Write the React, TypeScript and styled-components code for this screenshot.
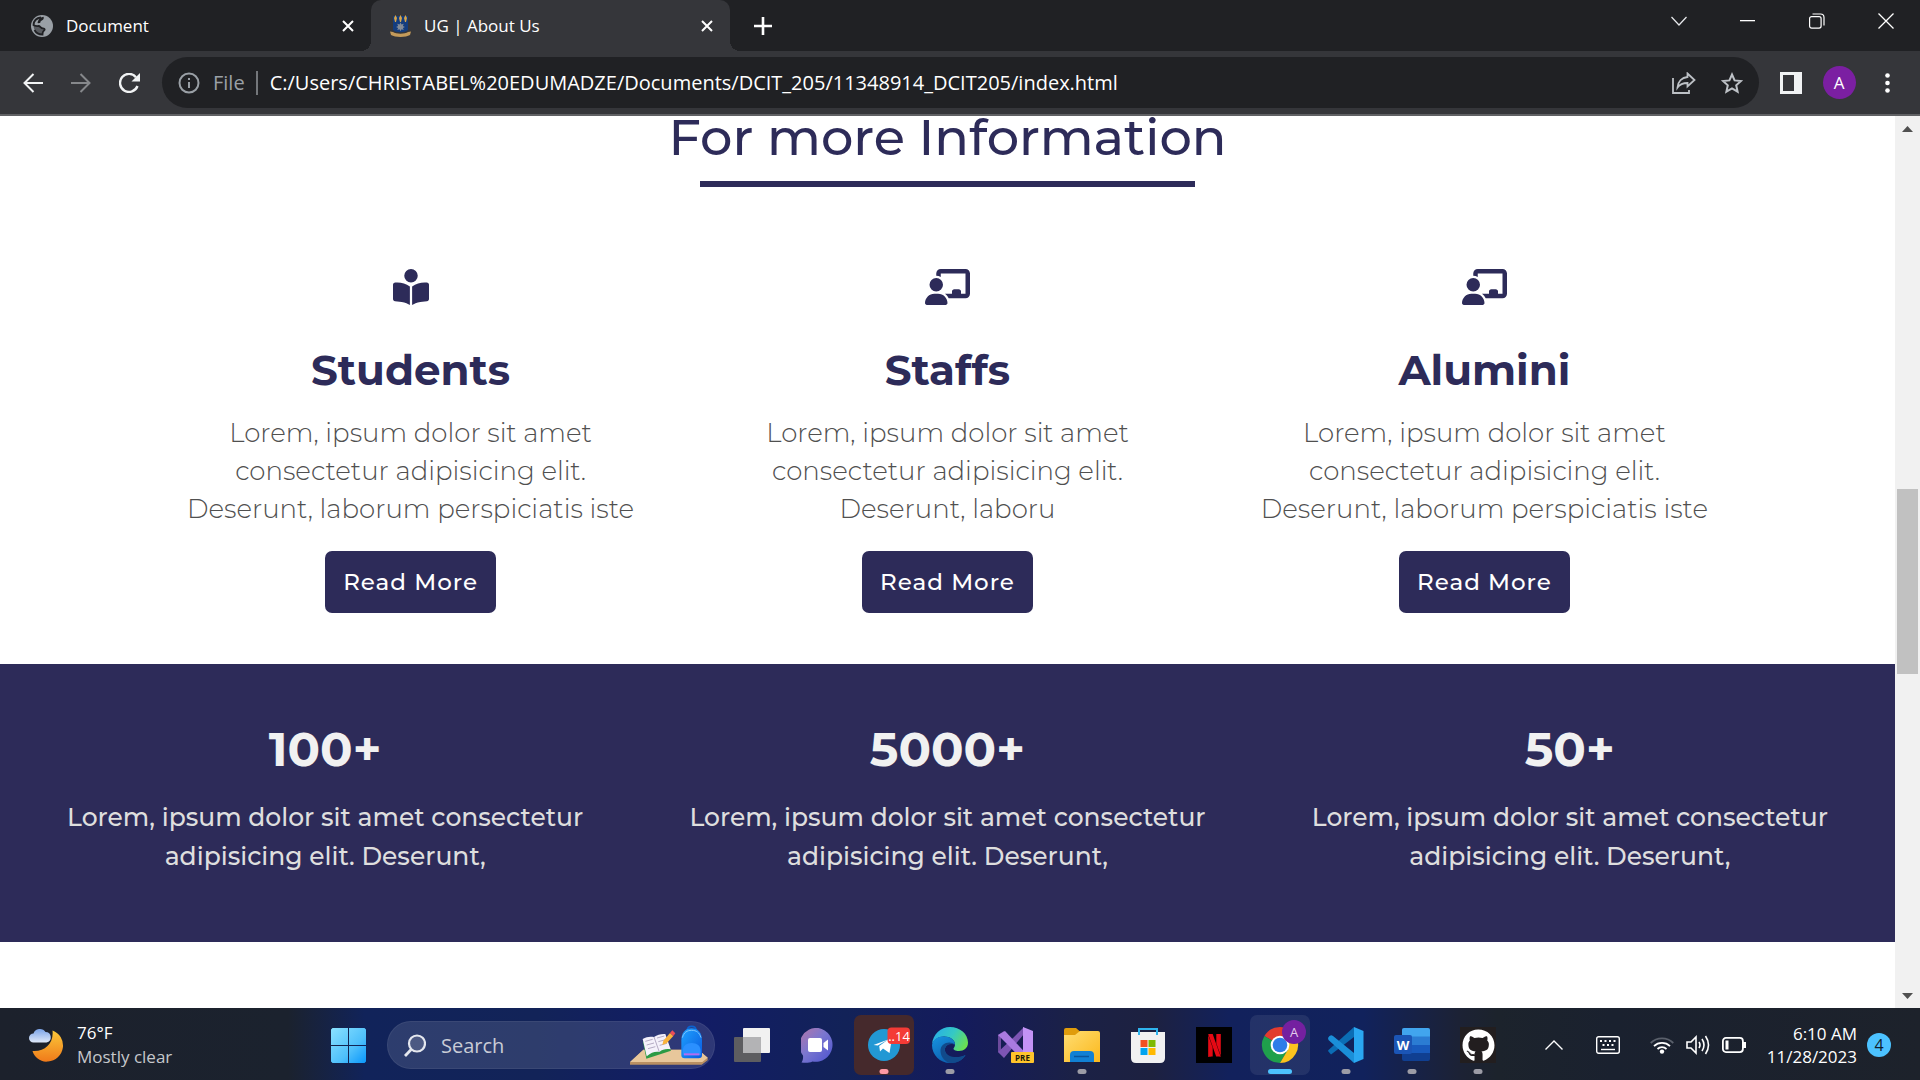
import React from "react";
import styled, { createGlobalStyle, css } from "styled-components";
import { FaBookOpenReader, FaChalkboardUser, FaGithub } from "react-icons/fa6";
import { SiNetflix } from "react-icons/si";

const brand = "#2d2b59";
const uiFont = `"Segoe UI", "Open Sans", "Noto Sans", sans-serif`;
const pageFont = `Montserrat, Inter, sans-serif`;

const GlobalStyle = createGlobalStyle`
  *, *::before, *::after { box-sizing: border-box; }
  html, body { margin: 0; background: #fff; }
  button, input { font: inherit; color: inherit; border: 0; padding: 0; background: none; outline: none; }
  button { cursor: pointer; }
  svg { display: block; flex: none; }
`;

const Screen = styled.div`
  display: flex;
  flex-direction: column;
  height: 100vh;
  overflow: hidden;
  font-family: ${uiFont};
`;

/* ---------- Browser frame ---------- */

const TabStrip = styled.header`
  display: flex;
  height: 51px;
  background: #202124;
  color: #fff;
`;

const Tab = styled.div<{ $active?: boolean }>`
  display: flex;
  align-items: center;
  width: ${(p) => (p.$active ? 359 : 371)}px;
  padding: 0 16px 0 ${(p) => (p.$active ? 19 : 31)}px;
  gap: 13px;
  font-size: 17px;
  position: relative;
  ${(p) =>
    p.$active &&
    css`
      background: #35363a;
      border-radius: 10px 10px 0 0;
      &::before,
      &::after {
        content: "";
        position: absolute;
        bottom: 0;
        width: 10px;
        height: 10px;
      }
      &::before {
        left: -10px;
        background: radial-gradient(circle at 0 0, transparent 10px, #35363a 10px);
      }
      &::after {
        right: -10px;
        background: radial-gradient(circle at 100% 0, transparent 10px, #35363a 10px);
      }
    `}
`;

const TabTitle = styled.span`
  flex: 1;
  white-space: nowrap;
`;

const IconButton = styled.button<{ $w?: number; $h?: number }>`
  display: flex;
  flex: none;
  align-items: center;
  justify-content: center;
  width: ${(p) => p.$w ?? 48}px;
  height: ${(p) => p.$h ?? 51}px;
`;

const WindowControls = styled.div`
  display: flex;
  margin-left: auto;
`;

const Toolbar = styled.nav`
  display: flex;
  align-items: center;
  padding: 6px 9px;
  background: #35363a;
  border-bottom: 2px solid #606164;
  color: #f1f3f4;
`;

const Omnibox = styled.div`
  display: flex;
  flex: 1;
  align-items: center;
  height: 51px;
  margin: 0 8px 0 9px;
  padding: 0 3px 0 16px;
  border-radius: 26px;
  background: #202124;
  font-size: 20px;
`;

const Scheme = styled.span`
  margin-left: 13px;
  padding-right: 11px;
  border-right: 2px solid #74777b;
  color: #9aa0a6;
  line-height: 24px;
`;

const Address = styled.input`
  flex: 1;
  min-width: 0;
  margin-left: 12px;
  color: #fff;
`;

const Avatar = styled.span`
  width: 33px;
  height: 33px;
  border-radius: 50%;
  background: #7b1fa2;
  color: #fff;
  font-size: 17px;
  line-height: 33px;
`;

/* ---------- Page ---------- */

const Viewport = styled.div`
  display: flex;
  flex: 1;
  min-height: 0;
`;

const Page = styled.main`
  flex: 1;
  overflow: clip;
  overflow-clip-margin: 12px;
  background: #fff;
  color: ${brand};
  font-family: ${pageFont};
  text-align: center;
`;

const Heading = styled.h1`
  width: max-content;
  margin: 0 auto;
  font-size: 51px;
  font-weight: 500;
  line-height: 42px;
`;

const Rule = styled.hr`
  width: 495px;
  height: 6px;
  margin: 23px auto 82px;
  border: 0;
  background: ${brand};
`;

const Cards = styled.section`
  display: grid;
  grid-template-columns: repeat(3, 1fr);
  width: 85%;
  margin: 0 auto;
`;

const Card = styled.article`
  display: flex;
  flex-direction: column;
  align-items: center;
  padding: 0 36px 51px;
`;

const CardIcon = styled.span<{ $wide?: boolean }>`
  svg {
    width: ${(p) => (p.$wide ? 45 : 36)}px;
    height: 36px;
  }
`;

const CardTitle = styled.h2`
  margin: 40px 0 19px;
  font-size: 42px;
  font-weight: 700;
  line-height: 50px;
`;

const CardText = styled.p`
  margin: 0 0 23px;
  color: #505050;
  font-size: 26px;
  font-weight: 300;
  line-height: 38px;
`;

const ReadMore = styled.a`
  padding: 0 18px;
  border-radius: 7px;
  background: ${brand};
  color: #fff;
  font-size: 23px;
  font-weight: 500;
  letter-spacing: 1px;
  line-height: 62px;
  text-decoration: none;
`;

const Stats = styled.section`
  display: grid;
  grid-template-columns: repeat(3, 1fr);
  padding: 56px 14px 66px;
  background: ${brand};
`;

const Stat = styled.div`
  padding: 0 45px;
`;

const StatNumber = styled.h2`
  margin: 0 0 20px;
  color: #f1f1f1;
  font-size: 48px;
  font-weight: 700;
  line-height: 58px;
`;

const StatText = styled.p`
  margin: 0;
  color: #dedede;
  font-size: 25px;
  font-weight: 500;
  line-height: 39px;
`;

const ScrollBar = styled.aside`
  display: flex;
  flex-direction: column;
  align-items: center;
  width: 25px;
  background: #f1f1f1;
`;

const ScrollSpace = styled.div<{ $grow: number }>`
  flex: ${(p) => p.$grow} 0 0;
`;

const ScrollThumb = styled.div`
  flex: 185 0 0;
  width: 21px;
  background: #c1c1c1;
`;

/* ---------- Taskbar ---------- */

const Taskbar = styled.footer`
  display: flex;
  align-items: center;
  height: 72px;
  padding-top: 2px;
  background: linear-gradient(90deg, #1c212c 0%, #1b222e 15%, #11235a 19%, #122358 28%, #121c66 36%, #122258 44%, #141b5c 50%, #1b2146 56%, #1d2140 60%, #12215c 64%, #11225c 71%, #1c2235 76%, #1c232c 78%, #1a212f 84%, #1d222b 100%);
  color: #fff;
  font-size: 17px;
`;

const Weather = styled.div`
  display: flex;
  align-items: center;
  width: 315px;
  padding-left: 29px;
  gap: 12px;
  line-height: 24px;
`;

const Muted = styled.div`
  color: #c6c8cb;
`;

const TaskButton = styled.button<{ $tile?: string; $mark?: string; $markWidth?: number }>`
  display: flex;
  flex: none;
  align-items: center;
  justify-content: center;
  position: relative;
  width: 60px;
  height: 60px;
  margin: 0 3px;
  border-radius: 7px;
  background: ${(p) => p.$tile ?? "transparent"};
  ${(p) =>
    p.$mark &&
    css`
      &::after {
        content: "";
        position: absolute;
        bottom: 1px;
        left: 50%;
        width: ${p.$markWidth ?? 9}px;
        height: 5px;
        border-radius: 3px;
        background: ${p.$mark};
        transform: translateX(-50%);
      }
    `}
`;

const SearchBox = styled.label`
  display: flex;
  align-items: center;
  width: 328px;
  height: 48px;
  margin: 0 4px 0 6px;
  padding: 0 6px 0 16px;
  gap: 15px;
  border: 1px solid rgba(255, 255, 255, 0.06);
  border-radius: 24px;
  background: rgba(255, 255, 255, 0.12);
  font-size: 20px;
  input {
    flex: 1;
    min-width: 0;
  }
  input::placeholder {
    color: #c9ccd6;
    opacity: 1;
  }
`;

const Tray = styled.div`
  display: flex;
  align-items: center;
  margin-left: auto;
  padding-right: 29px;
`;

const TrayButton = styled.button<{ $gap: number }>`
  margin-right: ${(p) => p.$gap}px;
`;

const Clock = styled.time`
  margin-right: 10px;
  line-height: 23px;
  text-align: right;
`;

const Notice = styled.span`
  width: 24px;
  height: 24px;
  border-radius: 50%;
  background: #4cc2ff;
  color: #10202c;
  font-size: 16px;
  line-height: 24px;
  text-align: center;
`;

/* ---------- Drawings ---------- */

const Close = () => (
  <svg width="12" height="12" viewBox="0 0 12 12" stroke="#fff" strokeWidth="2">
    <path d="M1 1l10 10M11 1L1 11" />
  </svg>
);

const Globe = () => (
  <svg width="22" height="22" viewBox="0 0 22 22">
    <circle cx="11" cy="11" r="11" fill="#9aa0a6" />
    <path d="M10 2.500C5.500 3 2.800 6 2.500 10c1.500 1 3 1.200 5 1 2 0 2 2.300 4.500 2.300 2 0 2.200 1.500.8 2.500-1.200.9-1.300 2-1.300 3.700-3.500 0-6.500-1.500-8-4.500" fill="none" stroke="#202124" strokeWidth="1.800" />
    <path d="M12.500 1.800c1 2.500-1 3.400-2.500 4.200-.8.500-.2 1.800-1.200 2-1 .2-1.600.2-2.300 0 .5-2.500 1.500-4.200 3.500-5.500z" fill="#202124" />
    <path d="M2.500 10.500c2 1.500 4 .8 6 1 1.800.3 2 2 3.800 2.200 1.700.2 1.400 1.800.2 2.600-1.100.8-1 1.700-1 3.200-5 0-8.700-3.500-9-9z" fill="#202124" opacity="0.55" />
  </svg>
);

const Crest = () => (
  <svg width="21" height="22" viewBox="0 0 21 22">
    <path d="M3 1h15v14c-3 3-12 3-15 0z" fill="#143d7e" />
    <path d="M5.500 0L7 3 6 7H5L4 3zM10.500 0L12 3l-1 4h-1L9 3zM15.500 0L17 3l-1 4h-1l-1-4z" fill="#d8a64a" />
    <path d="M10.500 7.500l1 2 2.200-.8-.8 2.200 2 1-2 1 .8 2.100-2.200-.7-1 1.900-1-1.900-2.200.7.8-2.100-2-1 2-1-.8-2.200 2.200.8z" fill="#848c96" />
    <path d="M0 16.500l3 .5c3 2.300 12 2.300 15 0l3-.5-1 3.500c-4 2.500-15 2.500-19 0z" fill="#c49b5a" />
  </svg>
);

const WeatherIcon = () => (
  <svg width="36" height="34" viewBox="0 0 36 34">
    <defs>
      <linearGradient id="moon" x1="0" y1="0" x2="0" y2="1">
        <stop stopColor="#fbc93a" />
        <stop offset="1" stopColor="#f07a1a" />
      </linearGradient>
      <linearGradient id="cloud" x1="0" y1="0" x2="0" y2="1">
        <stop stopColor="#7aa3e8" />
        <stop offset="1" stopColor="#dfe9fa" />
      </linearGradient>
    </defs>
    <path d="M23.500 2.500a16 16 0 0 1-4.500 31C12 34.500 5.500 29.500 3.500 23 16 24 25 15 23.500 2.500z" fill="url(#moon)" />
    <path d="M4.500 14.500a4.500 4.500 0 0 1 0-9A6.500 6 0 0 1 16.500 4a5.300 5.300 0 0 1 1 10.500z" fill="url(#cloud)" />
  </svg>
);

const WindowsLogo = () => (
  <svg width="35" height="35" viewBox="0 0 35 35">
    <defs>
      <linearGradient id="win" x1="0" y1="0" x2="1" y2="1">
        <stop stopColor="#8be2ff" />
        <stop offset="0.6" stopColor="#4fc0fb" />
        <stop offset="1" stopColor="#0a97fb" />
      </linearGradient>
    </defs>
    <path d="M1.500 0H17v17H0V1.500zM18 0h15.500L35 1.500V17H18zM0 18h17v17H1.500L0 33.500zM18 18h17v15.500L33.500 35H18z" fill="url(#win)" />
  </svg>
);

const SearchArt = () => (
  <svg width="78" height="40" viewBox="450 78 234 120">
    <defs>
      <linearGradient id="bag" x1="0" y1="0" x2="1" y2="1">
        <stop stopColor="#1fa2ff" />
        <stop offset="1" stopColor="#0a5be0" />
      </linearGradient>
    </defs>
    <path d="M450 190l40-38h165l28 24v8l-18 13H450z" fill="#b98f62" />
    <path d="M450 189l40-37h165l28 24-16 13z" fill="#e8c79b" />
    <path d="M489 128l66-18 18 45-74 24z" fill="#2c9a45" />
    <path d="M488 120c12-7 22-8 34-6 10-7 22-10 34-9l16 46c-14-2-24 0-34 8-14-2-24 2-38 13z" fill="#f4f1fb" />
    <path d="M522 114l16 45M496 127l22-6M500 138l22-6M504 149l22-6M531 117l22-6M535 128l22-6M539 139l22-6" stroke="#b4abc4" strokeWidth="3" />
    <path d="M550 125l20-23 10 9-20 22-13 5z" fill="#f9b23c" />
    <path d="M570 102l7-8 9 9-6 8z" fill="#ec4d59" />
    <path d="M622 94q0-12 13-12t13 12" fill="none" stroke="#0b62d0" strokeWidth="5" />
    <path d="M604 124c0-22 12-36 31-36s31 14 31 36v44q0 10-10 10h-42q-10 0-10-10z" fill="url(#bag)" />
    <path d="M607 116c5-16 14-22 28-22s23 6 28 22" fill="none" stroke="#7cc6ff" strokeWidth="3" />
    <path d="M608 158c0-18 11-26 27-26s27 8 27 26v11h-54z" fill="#2b90ff" />
    <path d="M612 166h46" stroke="#b46cf0" strokeWidth="6" />
  </svg>
);

const TaskView = () => (
  <svg width="36" height="34" viewBox="0 0 36 34">
    <rect y="9" width="27" height="25" rx="1" fill="#5d5d60" />
    <rect x="9" width="27" height="25" rx="1" fill="#f1f1f1" />
    <path d="M9 9h18v16H9z" fill="#b3b3b5" />
  </svg>
);

const Chat = () => (
  <svg width="35" height="35" viewBox="0 0 35 35">
    <defs>
      <linearGradient id="chat" x1="0" y1="0" x2="1" y2="1">
        <stop stopColor="#b475a8" />
        <stop offset="0.45" stopColor="#7b77cf" />
        <stop offset="1" stopColor="#4b52cf" />
      </linearGradient>
    </defs>
    <path d="M17.500 0a17 17 0 1 1-6 33.500C8 35.200 4 35 .5 34.500c1.300-2 1.800-4.500 1.500-7A17.200 17.200 0 0 1 17.500 0z" fill="url(#chat)" />
    <rect x="7" y="10" width="14" height="14" rx="2" fill="#fff" />
    <path d="M22.500 15l4.500-3.500v11L22.500 19z" fill="#fff" />
  </svg>
);

const Telegram = () => (
  <svg width="52" height="36" viewBox="0 0 52 36">
    <circle cx="26" cy="18" r="16" fill="#2298d4" />
    <path d="M15.500 18L34 11l-2.500 15-6.500-4.500-3 3-.8-5.500 9-6.500-10.500 6z" fill="#fff" />
    <rect x="29.500" y="0.500" width="22.500" height="16.500" rx="4" fill="#f43b36" />
    <text x="41" y="13.500" fill="#fff" fontSize="13" textAnchor="middle">..14</text>
  </svg>
);

const Edge = () => (
  <svg width="36" height="36" viewBox="0 0 36 36">
    <defs>
      <linearGradient id="edgeTop" x1="0" y1="0.3" x2="1" y2="0.7">
        <stop stopColor="#28aee6" />
        <stop offset="0.5" stopColor="#35c9c4" />
        <stop offset="1" stopColor="#6de04b" />
      </linearGradient>
      <linearGradient id="edgeBody" x1="0" y1="0" x2="0.7" y2="1">
        <stop stopColor="#1693e0" />
        <stop offset="1" stopColor="#0c58a8" />
      </linearGradient>
    </defs>
    <path d="M0 17C1 7 9 0 18 0c10 0 18 7 18 15.500C36 21 32 24 27 24c-4 0-5.500-1.200-5.500-2.500.5-1 1.500-2 1.500-4C23 13 18 9.500 12 9.500S2 13 0 17z" fill="url(#edgeTop)" />
    <path d="M0 18c1-6 6-8.500 12-8.500S23 13 23 17.500C17 15 12 19 13 24c1 6 10 10 20.500 4C31 33 25 36 18 36 8 36 0 28 0 18z" fill="url(#edgeBody)" />
    <path d="M23 17.500C19 13.500 8 15 8.500 24.500 9 31 14 35.500 19 36c7 0 12-3.500 14.500-8C25 32 14.500 30 13 24c-.8-5 4-8.500 10-6.500z" fill="#114a8b" />
  </svg>
);

const VisualStudio = () => (
  <svg width="36" height="36" viewBox="0 0 36 36">
    <path d="M0 8l6-4 20 25v7L3 9v18l-3-2z" fill="#6c4a9c" />
    <path d="M0 25l6 6L26 7V0L15 11z" fill="#7d55b4" />
    <path d="M0 8l7-4 28 30h-9z" fill="#a97ae0" />
    <path d="M25 0l10 4v28l-10 4z" fill="#c493f6" />
    <rect x="13" y="25" width="23" height="11" rx="1" fill="#ffc42b" />
    <text x="24.500" y="33.500" fontSize="8" fontWeight="700" fill="#201a08" textAnchor="middle">PRE</text>
  </svg>
);

const Folder = () => (
  <svg width="36" height="34" viewBox="0 0 36 34">
    <defs>
      <linearGradient id="folder" x1="0" y1="0" x2="1" y2="1">
        <stop stopColor="#ffdd72" />
        <stop offset="1" stopColor="#fbb81c" />
      </linearGradient>
    </defs>
    <path d="M0 2q0-2 2-2h10l4 3.500h18v8H0z" fill="#e09c0b" />
    <path d="M0 7h11l5-4h18q2 0 2 2v29H0z" fill="url(#folder)" />
    <path d="M6 34v-7q0-4 4-4h16q4 0 4 4v7z" fill="#1180d4" />
    <path d="M10 28.500h15" stroke="#0a559c" strokeWidth="1.500" />
  </svg>
);

const Store = () => (
  <svg width="36" height="36" viewBox="0 0 36 36">
    <path d="M1 5h34v26q0 5-5 5H6q-5 0-5-5z" fill="#f1f1f1" />
    <path d="M9 8V2h18v6" fill="none" stroke="#2fb4ee" strokeWidth="2" />
    <path d="M10.500 13h7v7h-7z" fill="#f25022" />
    <path d="M18.500 13h7v7h-7z" fill="#7fba00" />
    <path d="M10.500 21h7v7h-7z" fill="#00a4ef" />
    <path d="M18.500 21h7v7h-7z" fill="#ffb900" />
  </svg>
);

const NetflixTile = styled.span`
  display: grid;
  place-items: center;
  width: 36px;
  height: 36px;
  background: #000;
  color: #e50914;
`;

const GithubTile = styled(NetflixTile)`
  background: #221e1f;
  color: #fff;
`;

const Chrome = () => (
  <svg width="52" height="52" viewBox="0 0 52 52">
    <path d="M26 26L10.400 17A18 18 0 0 1 41.600 17H26z" fill="#e33b2e" />
    <path d="M10.400 17A18 18 0 0 0 26 44l8-13.500-8-4.500z" fill="#1fa04c" />
    <path d="M41.600 17A18 18 0 0 1 26 44l8-13.500V17z" fill="#fcc31e" />
    <circle cx="26" cy="26" r="9.300" fill="#fff" />
    <circle cx="26" cy="26" r="7.300" fill="#2f7de9" />
    <circle cx="40" cy="13" r="12" fill="#7420a0" />
    <text x="40" y="18" fontSize="13" fill="#e3cdec" textAnchor="middle">A</text>
  </svg>
);

const VsCode = () => (
  <svg width="36" height="36" viewBox="0 0 36 36">
    <path d="M0 24l3 3.500L26 10V0L.5 23z" fill="#0b6db5" />
    <path d="M0 11q2-4 5-2l21 17v10L.5 13z" fill="#1a8fd9" />
    <path d="M26 0l9.500 4v28L26 36z" fill="#2aa7f2" />
  </svg>
);

const Word = () => (
  <svg width="36" height="34" viewBox="0 0 36 34">
    <rect x="8" width="28" height="33" rx="2" fill="#103f91" />
    <path d="M8 2q0-2 2-2h24q2 0 2 2v7H8z" fill="#41a5ee" />
    <path d="M8 8.500h28V17H8z" fill="#2b7cd3" />
    <path d="M8 17h28v8H8z" fill="#185abd" />
    <rect y="7" width="18" height="19" rx="2" fill="#1b55b5" />
    <text x="9" y="21.500" fontSize="13" fontWeight="700" fill="#fff" textAnchor="middle">W</text>
  </svg>
);

const StrokeIcon = styled.svg<{ $weight?: number }>`
  fill: none;
  stroke: currentColor;
  stroke-width: ${(p) => p.$weight ?? 2};
`;

/* ---------- Data ---------- */

const cards = [
  { title: "Students", wide: false, Icon: FaBookOpenReader, text: "Lorem, ipsum dolor sit amet consectetur adipisicing elit. Deserunt, laborum perspiciatis iste" },
  { title: "Staffs", wide: true, Icon: FaChalkboardUser, text: "Lorem, ipsum dolor sit amet consectetur adipisicing elit. Deserunt, laboru" },
  { title: "Alumini", wide: true, Icon: FaChalkboardUser, text: "Lorem, ipsum dolor sit amet consectetur adipisicing elit. Deserunt, laborum perspiciatis iste" },
];

const stats = ["100+", "5000+", "50+"];

const gray = "#9c9ca6";
const apps: { name: string; icon: React.ReactNode; tile?: string; mark?: string; markWidth?: number }[] = [
  { name: "Task view", icon: <TaskView /> },
  { name: "Chat", icon: <Chat /> },
  { name: "Telegram", icon: <Telegram />, tile: "#45292c", mark: "#ff99a4" },
  { name: "Edge", icon: <Edge />, mark: gray },
  { name: "Visual Studio", icon: <VisualStudio /> },
  { name: "File Explorer", icon: <Folder />, mark: gray },
  { name: "Store", icon: <Store /> },
  { name: "Netflix", icon: <NetflixTile><SiNetflix size={23} /></NetflixTile> },
  { name: "Chrome", icon: <Chrome />, tile: "rgba(255,255,255,0.08)", mark: "#4cc2ff", markWidth: 24 },
  { name: "Visual Studio Code", icon: <VsCode />, mark: gray },
  { name: "Word", icon: <Word />, mark: gray },
  { name: "GitHub", icon: <GithubTile><FaGithub size={33} /></GithubTile>, mark: gray },
];

export default function App() {
  return (
    <Screen>
      <GlobalStyle />
      <TabStrip>
        <Tab>
          <Globe />
          <TabTitle>Document</TabTitle>
          <IconButton $w={14} aria-label="Close tab"><Close /></IconButton>
        </Tab>
        <Tab $active>
          <Crest />
          <TabTitle>UG | About Us</TabTitle>
          <IconButton $w={14} aria-label="Close tab"><Close /></IconButton>
        </Tab>
        <IconButton $w={66} aria-label="New tab">
          <StrokeIcon $weight={2.6} width="18" height="18" viewBox="0 0 18 18">
            <path d="M9 0v18M0 9h18" />
          </StrokeIcon>
        </IconButton>
        <WindowControls>
          <IconButton $w={69} $h={42} aria-label="Search tabs">
            <svg width="16" height="10" viewBox="0 0 16 10" fill="none" stroke="#e8eaed" strokeWidth="1.200"><path d="M.5 1L8 9l7.500-8" /></svg>
          </IconButton>
          <IconButton $w={69} $h={42} aria-label="Minimize">
            <svg width="15" height="2" viewBox="0 0 15 2"><path d="M0 0h15v1.300H0z" fill="#fff" /></svg>
          </IconButton>
          <IconButton $w={69} $h={42} aria-label="Restore">
            <svg width="16" height="16" viewBox="0 0 16 16" fill="none" stroke="#fff" strokeWidth="1.200"><rect x=".6" y="3.600" width="11.500" height="11.500" rx="2" /><path d="M3.500 1h8q3.500 0 3.500 3.500v8" /></svg>
          </IconButton>
          <IconButton $w={69} $h={42} aria-label="Close window">
            <svg width="16" height="16" viewBox="0 0 16 16" stroke="#fff" strokeWidth="1.300"><path d="M.5.5l15 15M15.500.5l-15 15" /></svg>
          </IconButton>
        </WindowControls>
      </TabStrip>

      <Toolbar>
        <IconButton aria-label="Back">
          <StrokeIcon width="20" height="20" viewBox="0 0 20 20"><path d="M20 10H2M10.500 1L1.500 10l9 9" /></StrokeIcon>
        </IconButton>
        <IconButton aria-label="Forward" disabled>
          <svg width="20" height="20" viewBox="0 0 20 20" fill="none" stroke="#86888b" strokeWidth="2"><path d="M0 10h18M9.500 1l9 9-9 9" /></svg>
        </IconButton>
        <IconButton aria-label="Reload">
          <StrokeIcon $weight={2.4} width="21" height="20" viewBox="0 0 21 20"><path d="M18.500 13A9 9 0 1 1 17 4.200" /><path d="M21 0v8.500h-8.500z" fill="currentColor" stroke="none" /></StrokeIcon>
        </IconButton>
        <Omnibox>
          <svg width="22" height="22" viewBox="0 0 22 22" fill="none" stroke="#9aa0a6" strokeWidth="2"><circle cx="11" cy="11" r="9.500" /><path d="M11 10v6M11 6v2" /></svg>
          <Scheme>File</Scheme>
          <Address aria-label="Address" readOnly value="C:/Users/CHRISTABEL%20EDUMADZE/Documents/DCIT_205/11348914_DCIT205/index.html" />
          <IconButton aria-label="Share">
            <svg width="24" height="22" viewBox="0 0 24 22" fill="none" stroke="#bdc1c6" strokeWidth="1.800"><path d="M1 6v15h16v-3" /><path d="M15.500 1.500L22.500 8l-7 6.500V11C11 11 8 12 5.500 15.500 6 9.500 10 5.500 15.500 5z" /></svg>
          </IconButton>
          <IconButton aria-label="Bookmark">
            <svg width="22" height="22" viewBox="0 0 22 22" fill="none" stroke="#bdc1c6" strokeWidth="2"><path d="M11 2.500l2.600 5.900 6.400.6-4.800 4.300 1.400 6.300L11 16.300l-5.600 3.300 1.400-6.300L2 9l6.400-.6z" /></svg>
          </IconButton>
        </Omnibox>
        <IconButton aria-label="Side panel">
          <svg width="22" height="22" viewBox="0 0 22 22"><path d="M0 0h22v22H0zM3 3v16h11V3z" fill="#f1f3f4" fillRule="evenodd" /></svg>
        </IconButton>
        <IconButton aria-label="Profile"><Avatar>A</Avatar></IconButton>
        <IconButton aria-label="Menu">
          <svg width="5" height="20" viewBox="0 0 5 20" fill="#fff"><circle cx="2.500" cy="2.500" r="2.300" /><circle cx="2.500" cy="10" r="2.300" /><circle cx="2.500" cy="17.500" r="2.300" /></svg>
        </IconButton>
      </Toolbar>

      <Viewport>
        <Page>
          <Heading>For more Information</Heading>
          <Rule />
          <Cards>
            {cards.map(({ title, wide, Icon, text }) => (
              <Card key={title}>
                <CardIcon $wide={wide}><Icon /></CardIcon>
                <CardTitle>{title}</CardTitle>
                <CardText>{text}</CardText>
                <ReadMore href="#">Read More</ReadMore>
              </Card>
            ))}
          </Cards>
          <Stats>
            {stats.map((n) => (
              <Stat key={n}>
                <StatNumber>{n}</StatNumber>
                <StatText>Lorem, ipsum dolor sit amet consectetur adipisicing elit. Deserunt,</StatText>
              </Stat>
            ))}
          </Stats>
        </Page>
        <ScrollBar>
          <IconButton $w={25} $h={25} aria-label="Scroll up">
            <svg width="11" height="6" viewBox="0 0 11 6"><path d="M0 6l5.500-6L11 6z" fill="#505050" /></svg>
          </IconButton>
          <ScrollSpace $grow={348} />
          <ScrollThumb />
          <ScrollSpace $grow={309} />
          <IconButton $w={25} $h={25} aria-label="Scroll down">
            <svg width="11" height="6" viewBox="0 0 11 6"><path d="M0 0h11L5.500 6z" fill="#505050" /></svg>
          </IconButton>
        </ScrollBar>
      </Viewport>

      <Taskbar>
        <Weather>
          <WeatherIcon />
          <div>
            <div>76°F</div>
            <Muted>Mostly clear</Muted>
          </div>
        </Weather>
        <TaskButton aria-label="Start"><WindowsLogo /></TaskButton>
        <SearchBox>
          <svg width="22" height="23" viewBox="0 0 22 23" fill="none" stroke="#e4e7ee" strokeWidth="2.200"><circle cx="13" cy="9.500" r="8" fill="rgba(255,255,255,.15)" /><path d="M7.200 15.500L1 22" strokeWidth="2.800" /></svg>
          <input aria-label="Search" placeholder="Search" />
          <SearchArt />
        </SearchBox>
        {apps.map((a) => (
          <TaskButton key={a.name} aria-label={a.name} $tile={a.tile} $mark={a.mark} $markWidth={a.markWidth}>
            {a.icon}
          </TaskButton>
        ))}
        <Tray>
          <TrayButton $gap={33} aria-label="Hidden icons">
            <svg width="18" height="10" viewBox="0 0 18 10" fill="none" stroke="#fff" strokeWidth="1.400"><path d="M.5 9.500L9 1l8.500 8.500" /></svg>
          </TrayButton>
          <TrayButton $gap={30} aria-label="Touch keyboard">
            <svg width="24" height="18" viewBox="0 0 24 18" fill="none" stroke="#fff" strokeWidth="1.400"><rect x=".7" y=".7" width="22.600" height="16.600" rx="2" /><path d="M4 5h2m2.500 0h2m2.500 0h2m2.500 0h2M6.500 9h2m2.500 0h2m2.500 0h2" strokeWidth="2" /><path d="M5 13.500h14" /></svg>
          </TrayButton>
          <TrayButton $gap={12} aria-label="Network">
            <svg width="24" height="18" viewBox="0 0 24 18" fill="none" stroke="#fff" strokeWidth="1.800"><path d="M.7 7a16 16 0 0 1 22.600 0" stroke="#5a606b" /><path d="M4 10.200a11.500 11.500 0 0 1 16 0M7.500 13a6.500 6.500 0 0 1 9 0" /><circle cx="12" cy="15.600" r="2.200" fill="#fff" stroke="none" /></svg>
          </TrayButton>
          <TrayButton $gap={12} aria-label="Volume">
            <svg width="24" height="20" viewBox="0 0 24 20" fill="none" stroke="#fff" strokeWidth="1.600"><path d="M1 7h4l5-5v16l-5-5H1z" /><path d="M13 7q2 3 0 6M16 4q4 6 0 12M19.500 1q6 9 0 18" /></svg>
          </TrayButton>
          <TrayButton $gap={20} aria-label="Battery">
            <svg width="25" height="16" viewBox="0 0 25 16" fill="none" stroke="#fff" strokeWidth="1.800"><rect x=".9" y=".9" width="20" height="14.200" rx="3" /><path d="M5 3.500v9" strokeWidth="3" /><path d="M22.500 5v6" strokeWidth="3" /></svg>
          </TrayButton>
          <Clock>
            <div>6:10 AM</div>
            <div>11/28/2023</div>
          </Clock>
          <Notice>4</Notice>
        </Tray>
      </Taskbar>
    </Screen>
  );
}
